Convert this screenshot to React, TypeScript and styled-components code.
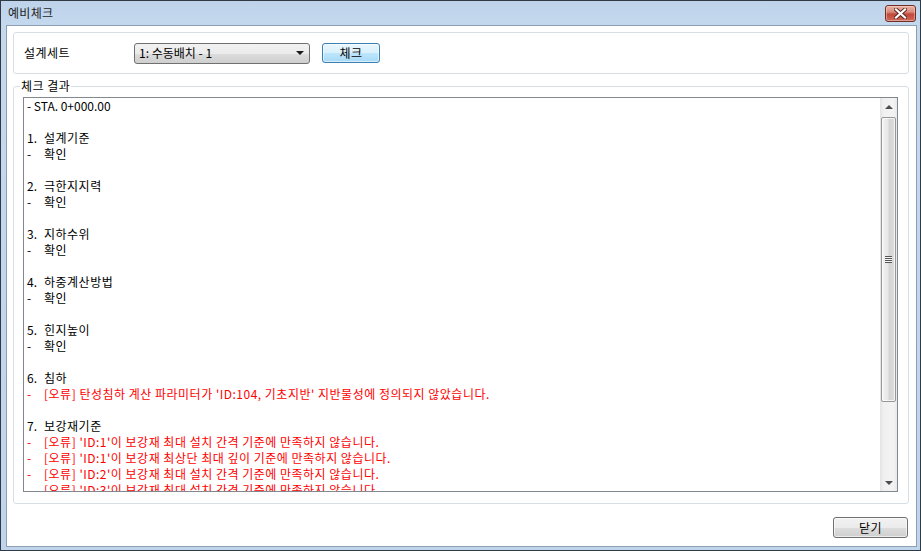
import styled, { createGlobalStyle } from "styled-components";

const GlobalStyle = createGlobalStyle`
  html, body {
    margin: 0;
    padding: 0;
    background: #ffffff;
  }
  body {
    font-family: "Noto Sans CJK KR", "Liberation Sans", sans-serif;
    font-size: 12px;
    color: #000000;
  }
`;

const Window = styled.div`
  box-sizing: border-box;
  width: 921px;
  height: 551px;
  border: 1px solid #2f3a45;
  background: linear-gradient(to bottom, #bed3ea 0px, #c4d8ee 24px, #c0d5ec 100%);
  padding: 0 3px 3px 5px;
  display: flex;
  flex-direction: column;
`;

const TitleBar = styled.div`
  height: 24px;
  display: flex;
  align-items: flex-start;
  justify-content: space-between;
  padding: 0 1px 0 2px;
`;

const Title = styled.span`
  margin-top: 4px;
  font-size: 12px;
  line-height: 16px;
  letter-spacing: 0.3px;
  color: #1e1e1e;
`;

const CloseButton = styled.div`
  box-sizing: border-box;
  margin-top: 4px;
  width: 31px;
  height: 17px;
  border: 1px solid #6e3028;
  border-radius: 3px;
  background: linear-gradient(to bottom, #eab3a6 0%, #d98a7a 40%, #c2473a 55%, #cf6a5a 100%);
  display: flex;
  align-items: center;
  justify-content: center;
  box-shadow: inset 0 0 0 1px rgba(255, 220, 210, 0.45);
`;

const Client = styled.div`
  flex: 1;
  display: flex;
  flex-direction: column;
  background: #ffffff;
  border: 1px solid #8d9fb3;
  padding: 6px 7px 0 6px;
  min-height: 0;
`;

const TopGroup = styled.div`
  box-sizing: border-box;
  height: 42px;
  border: 1px solid #d5dfe5;
  border-radius: 3px;
  display: flex;
  align-items: center;
  padding: 0 0 1px 10px;
`;

const FieldLabel = styled.span`
  width: 110px;
  line-height: 16px;
  letter-spacing: 0.5px;
`;

const Combo = styled.div`
  box-sizing: border-box;
  width: 176px;
  height: 21px;
  border: 1px solid #707070;
  border-radius: 3px;
  background: linear-gradient(to bottom, #f2f2f2 0%, #ebebeb 50%, #dddddd 51%, #cfcfcf 100%);
  display: flex;
  align-items: center;
  justify-content: space-between;
  padding: 0 5px 0 4px;
  line-height: 16px;
  color: #000000;
  margin-top: 1px;
`;

const DropArrow = styled.span`
  width: 0;
  height: 0;
  border-left: 4px solid transparent;
  border-right: 4px solid transparent;
  border-top: 4px solid #1a1a1a;
`;

const PushButton = styled.div<{ $focused?: boolean; $width: number }>`
  box-sizing: border-box;
  width: ${(p) => p.$width}px;
  height: ${(p) => (p.$focused ? 20 : 21)}px;
  border: 1px solid ${(p) => (p.$focused ? "#3c7fb1" : "#707070")};
  border-radius: 3px;
  background: ${(p) =>
    p.$focused
      ? "linear-gradient(to bottom, #eaf6fd 0%, #d9f0fc 50%, #bee6fd 51%, #a7d9f5 100%)"
      : "linear-gradient(to bottom, #f2f2f2 0%, #ebebeb 50%, #dddddd 51%, #cfcfcf 100%)"};
  box-shadow: inset 0 0 0 1px ${(p) => (p.$focused ? "rgba(255,255,255,0.55)" : "rgba(255,255,255,0.6)")};
  display: flex;
  align-items: center;
  justify-content: center;
  line-height: 16px;
  letter-spacing: 0.5px;
  margin-left: ${(p) => (p.$focused ? 12 : 0)}px;
`;

const ResultGroup = styled.fieldset`
  box-sizing: border-box;
  margin: 4px 0 0 0;
  height: 426px;
  border: 1px solid #d5dfe5;
  border-radius: 3px;
  padding: 3px 10px 10px 9px;
  min-width: 0;
  display: flex;
`;

const Legend = styled.legend`
  padding: 0 1px;
  margin-left: -3px;
  line-height: 16px;
  font-size: 12px;
  letter-spacing: 0.5px;
`;

const TextBox = styled.div`
  box-sizing: border-box;
  width: 100%;
  height: 395px;
  border: 1px solid #828790;
  display: flex;
  background: #ffffff;
`;

const Lines = styled.div`
  flex: 1;
  overflow: hidden;
  padding: 0 0 0 3px;
`;

const Line = styled.div<{ $error?: boolean }>`
  height: 16px;
  line-height: 16px;
  white-space: pre;
  display: flex;
  color: ${(p) => (p.$error ? "#ff0000" : "#000000")};
`;

const Marker = styled.span`
  width: 17px;
  flex: none;
`;

const LineText = styled.span`
  letter-spacing: 0.5px;
`;

const ScrollBar = styled.div`
  width: 17px;
  flex: none;
  display: flex;
  flex-direction: column;
  background: linear-gradient(to right, #e3e3e3 0%, #f0f0f0 20%, #f3f3f3 80%, #e8e8e8 100%);
`;

const ScrollArrow = styled.div<{ $down?: boolean }>`
  height: 17px;
  display: flex;
  align-items: center;
  justify-content: center;
  &::after {
    content: "";
    width: 0;
    height: 0;
    border-left: 4px solid transparent;
    border-right: 4px solid transparent;
    ${(p) => (p.$down ? "border-top: 4px solid #4d4d4d;" : "border-bottom: 4px solid #4d4d4d;")}
  }
`;

const Track = styled.div`
  flex: 1;
  padding: 2px 1px 0 1px;
`;

const Thumb = styled.div`
  box-sizing: border-box;
  height: 285px;
  border: 1px solid #979797;
  border-radius: 2px;
  background: linear-gradient(to right, #f3f3f3 0%, #e6e6e6 45%, #d4d4d4 55%, #dcdcdc 100%);
  box-shadow: inset 0 0 0 1px rgba(255, 255, 255, 0.7);
  display: flex;
  align-items: center;
  justify-content: center;
`;

const Grip = styled.div`
  width: 7px;
  height: 7px;
  background: repeating-linear-gradient(to bottom, #555555 0px, #555555 1px, #f4f4f4 1px, #f4f4f4 2px);
`;

const Footer = styled.div`
  display: flex;
  justify-content: flex-end;
  padding: 13px 1px 0 0;
`;

type Row = { marker?: string; text: string; error?: boolean; plain?: boolean };

const rows: Row[] = [
  { plain: true, text: "- STA. 0+000.00" },
  { plain: true, text: "" },
  { marker: "1.", text: "설계기준" },
  { marker: "-", text: "확인" },
  { plain: true, text: "" },
  { marker: "2.", text: "극한지지력" },
  { marker: "-", text: "확인" },
  { plain: true, text: "" },
  { marker: "3.", text: "지하수위" },
  { marker: "-", text: "확인" },
  { plain: true, text: "" },
  { marker: "4.", text: "하중계산방법" },
  { marker: "-", text: "확인" },
  { plain: true, text: "" },
  { marker: "5.", text: "힌지높이" },
  { marker: "-", text: "확인" },
  { plain: true, text: "" },
  { marker: "6.", text: "침하" },
  { marker: "-", error: true, text: "[오류] 탄성침하 계산 파라미터가 'ID:104, 기초지반' 지반물성에 정의되지 않았습니다." },
  { plain: true, text: "" },
  { marker: "7.", text: "보강재기준" },
  { marker: "-", error: true, text: "[오류] 'ID:1'이 보강재 최대 설치 간격 기준에 만족하지 않습니다." },
  { marker: "-", error: true, text: "[오류] 'ID:1'이 보강재 최상단 최대 깊이 기준에 만족하지 않습니다." },
  { marker: "-", error: true, text: "[오류] 'ID:2'이 보강재 최대 설치 간격 기준에 만족하지 않습니다." },
  { marker: "-", error: true, text: "[오류] 'ID:3'이 보강재 최대 설치 간격 기준에 만족하지 않습니다." },
];

function CloseGlyph() {
  return (
    <svg width="13" height="11" viewBox="0 0 13 11">
      <path
        d="M2 1.5 L11 9.5 M11 1.5 L2 9.5"
        stroke="#5a2620"
        strokeWidth="4"
        strokeLinecap="square"
      />
      <path
        d="M2 1.5 L11 9.5 M11 1.5 L2 9.5"
        stroke="#ffffff"
        strokeWidth="2.2"
        strokeLinecap="square"
      />
    </svg>
  );
}

function App() {
  return (
    <>
      <GlobalStyle />
      <Window>
        <TitleBar>
          <Title>예비체크</Title>
          <CloseButton>
            <CloseGlyph />
          </CloseButton>
        </TitleBar>
        <Client>
          <TopGroup>
            <FieldLabel>설계세트</FieldLabel>
            <Combo>
              <span>1: 수동배치 - 1</span>
              <DropArrow />
            </Combo>
            <PushButton $focused $width={58}>체크</PushButton>
          </TopGroup>
          <ResultGroup>
            <Legend>체크 결과</Legend>
            <TextBox>
              <Lines>
                {rows.map((r, i) => (
                  <Line key={i} $error={r.error}>
                    {r.plain ? (
                      r.text
                    ) : (
                      <>
                        <Marker>{r.marker}</Marker>
                        <LineText>{r.text}</LineText>
                      </>
                    )}
                  </Line>
                ))}
              </Lines>
              <ScrollBar>
                <ScrollArrow />
                <Track>
                  <Thumb>
                    <Grip />
                  </Thumb>
                </Track>
                <ScrollArrow $down />
              </ScrollBar>
            </TextBox>
          </ResultGroup>
          <Footer>
            <PushButton $width={75}>닫기</PushButton>
          </Footer>
        </Client>
      </Window>
    </>
  );
}

export default App;
